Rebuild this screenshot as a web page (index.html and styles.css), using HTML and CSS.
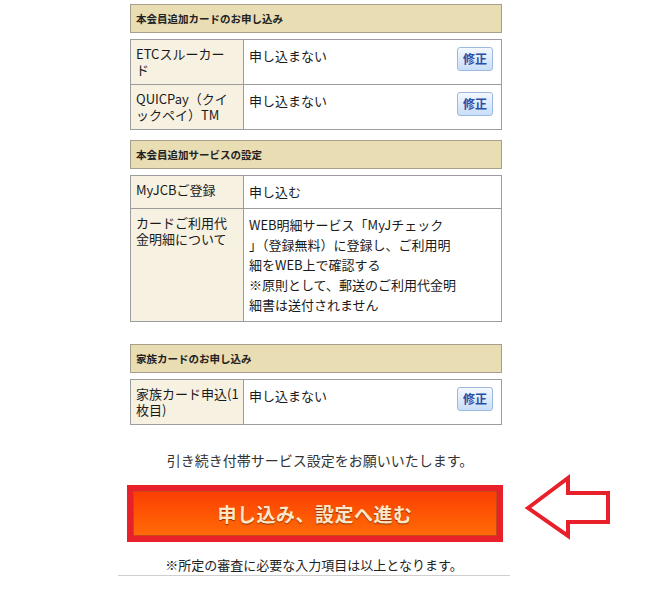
FILE: index.html
```html
<!DOCTYPE html>
<html lang="ja">
<head>
<meta charset="utf-8">
<link rel="stylesheet" href="styles.css">
</head>
<body>
<div class="page">
  <div class="content">
    <div class="sec-head first">本会員追加カードのお申し込み</div>
    <div class="tbl">
      <div class="row">
        <div class="label">ETCスルーカー<br>ド</div>
        <div class="value"><span class="val-text">申し込まない</span><span class="fix">修正</span></div>
      </div>
      <div class="row">
        <div class="label">QUICPay（クイ<br>ックペイ）TM</div>
        <div class="value"><span class="val-text">申し込まない</span><span class="fix">修正</span></div>
      </div>
    </div>

    <div class="sec-head second">本会員追加サービスの設定</div>
    <div class="tbl">
      <div class="row">
        <div class="label">MyJCBご登録</div>
        <div class="value"><span class="val-text">申し込む</span></div>
      </div>
      <div class="row">
        <div class="label">カードご利用代<br>金明細について</div>
        <div class="value"><span class="val-text">WEB明細サービス「MyJチェック<br>」（登録無料）に登録し、ご利用明<br>細をWEB上で確認する<br>※原則として、郵送のご利用代金明<br>細書は送付されません</span></div>
      </div>
    </div>

    <div class="sec-head third">家族カードのお申し込み</div>
    <div class="tbl">
      <div class="row">
        <div class="label">家族カード申込(1<br>枚目)</div>
        <div class="value"><span class="val-text">申し込まない</span><span class="fix">修正</span></div>
      </div>
    </div>
  </div>

  <p class="notice">引き続き付帯サービス設定をお願いいたします。</p>

  <div class="btn-wrap">
    <div class="btn-frame">
      <div class="btn">申し込み、設定へ進む</div>
    </div>
  </div>

  <p class="foot">※所定の審査に必要な入力項目は以上となります。</p>
</div>

<svg class="arrow" width="100" height="80" viewBox="0 0 100 80">
  <polygon points="8,38 48,8 48,23 88,23 88,52 48,52 48,66" fill="#ffffff" stroke="#e8202a" stroke-width="4" stroke-linejoin="miter"/>
</svg>
</body>
</html>
```

FILE: styles.css
```css
* { box-sizing: border-box; }
html, body { margin: 0; padding: 0; background: #ffffff; }
body {
  font-family: "Noto Sans CJK JP", "Noto Sans", sans-serif;
  color: #222;
  width: 660px;
  height: 594px;
  position: relative;
  overflow: hidden;
}
.page {
  width: 392px;
  margin-left: 118px;
  border-bottom: 1px solid #cfcfcf;
}
.content {
  width: 372px;
  margin-left: 12px;
}
.sec-head {
  height: 29px;
  background: #e9ddb4;
  border: 1px solid #a59f8c;
  font-size: 10.5px;
  font-weight: bold;
  line-height: 27px;
  padding-left: 5px;
  color: #222;
}
.sec-head.first { margin-top: 4px; }
.sec-head.second { margin-top: 10px; }
.sec-head.third { margin-top: 22px; }
.tbl {
  margin-top: 6px;
  border: 1px solid #9c9c9c;
  background: #fff;
}
.row {
  display: grid;
  grid-template-columns: 113px 1fr;
}
.row + .row { border-top: 1px solid #9c9c9c; }
.label {
  background: #f7f1e2;
  border-right: 1px solid #9c9c9c;
  padding: 6px 4px 6px 5px;
  font-size: 13px;
  line-height: 16px;
  white-space: nowrap;
  color: #1a1a1a;
}
.value {
  display: flex;
  justify-content: space-between;
  align-items: flex-start;
  padding: 6px 8px 6px 5px;
  font-size: 13px;
  line-height: 20px;
  white-space: nowrap;
  color: #1a1a1a;
}
.fix {
  display: block;
  width: 36px;
  height: 24px;
  margin-top: 1px;
  border: 1px solid #9db9df;
  border-radius: 3px;
  background: linear-gradient(#f4f8ff, #c9def8);
  color: #2b4ea6;
  font-size: 12px;
  font-weight: bold;
  line-height: 22px;
  text-align: center;
}
.notice {
  margin: 25px 0 0;
  padding-left: 12px;
  text-align: center;
  font-size: 14px;
  line-height: 20px;
  color: #333;
}
.btn-wrap {
  margin-top: 15px;
  padding-left: 9px;
}
.btn-frame {
  width: 376px;
  height: 57px;
  border: 6px solid #e8202a;
}
.btn {
  height: 100%;
  border: 1px solid #c8481c;
  background: linear-gradient(#fb3e02, #ff5a04 60%, #ff6a08);
  color: #fde6c6;
  font-size: 19px;
  font-weight: bold;
  line-height: 43px;
  text-align: center;
  text-shadow: 0 1px 1px rgba(90, 30, 0, 0.7);
  letter-spacing: 0.5px;
}
.foot {
  margin: 14px 0 0;
  padding-bottom: 1px;
  text-align: center;
  font-size: 13px;
  line-height: 18px;
  color: #222;
}
.arrow {
  position: absolute;
  left: 520px;
  top: 470px;
}
```
